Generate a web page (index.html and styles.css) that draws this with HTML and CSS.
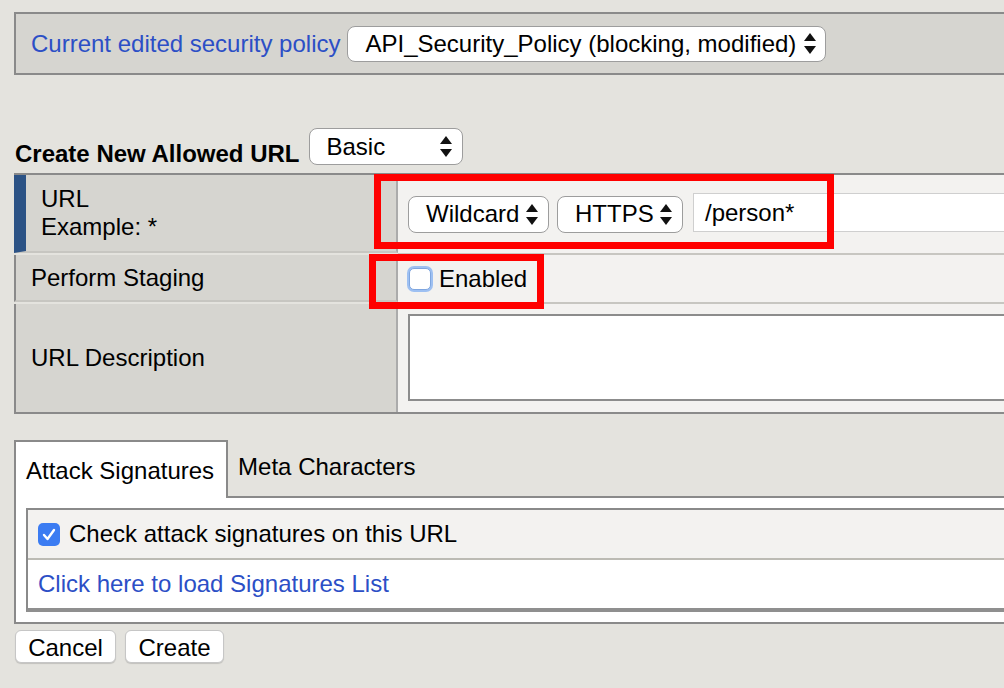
FILE: index.html
```html
<!DOCTYPE html>
<html>
<head>
<meta charset="utf-8">
<link rel="stylesheet" href="styles.css">
</head>
<body>
<div class="page">
  <div class="policy-bar">
    <span class="policy-label">Current edited security policy</span>
    <span class="select select-policy"><span>API_Security_Policy (blocking, modified)</span><svg class="arrows" viewBox="0 0 12 21" width="12" height="21"><path d="M6 0 L12 8 H0 Z"/><path d="M0 13 H12 L6 21 Z"/></svg></span>
  </div>

  <div class="create-row">
    <h1 class="create-title">Create New Allowed URL</h1>
    <span class="select select-basic"><span>Basic</span><svg class="arrows" viewBox="0 0 12 21" width="12" height="21"><path d="M6 0 L12 8 H0 Z"/><path d="M0 13 H12 L6 21 Z"/></svg></span>
  </div>

  <div class="form-table">
    <div class="label-cell row-url label-active">
      <div class="label-lines"><div>URL</div><div>Example: *</div></div>
    </div>
    <div class="value-cell row-url">
      <span class="select select-wild"><span>Wildcard</span><svg class="arrows" viewBox="0 0 12 21" width="12" height="21"><path d="M6 0 L12 8 H0 Z"/><path d="M0 13 H12 L6 21 Z"/></svg></span>
      <span class="select select-proto"><span>HTTPS</span><svg class="arrows" viewBox="0 0 12 21" width="12" height="21"><path d="M6 0 L12 8 H0 Z"/><path d="M0 13 H12 L6 21 Z"/></svg></span>
      <span class="text-input">/person*</span>
    </div>

    <div class="label-cell row-staging">Perform Staging</div>
    <div class="value-cell row-staging">
      <span class="checkbox checkbox-focus"></span>
      <span class="check-label">Enabled</span>
    </div>

    <div class="label-cell row-desc">URL Description</div>
    <div class="value-cell row-desc">
      <span class="textarea"></span>
    </div>
  </div>

  <div class="tabs">
    <div class="tab tab-active">Attack Signatures</div>
    <div class="tab tab-meta">Meta Characters</div>
  </div>
  <div class="tab-panel">
    <div class="inner-box">
      <div class="inner-row inner-row-check">
        <span class="checkbox checkbox-checked"><svg viewBox="0 0 22 23" width="22" height="23"><path d="M6 12 L9.5 16 L16 7" fill="none" stroke="#fff" stroke-width="2.4" stroke-linecap="round" stroke-linejoin="round"/></svg></span>
        <span class="check-label">Check attack signatures on this URL</span>
      </div>
      <div class="inner-row inner-row-link">
        <a class="link" href="#">Click here to load Signatures List</a>
      </div>
    </div>
  </div>

  <div class="buttons">
    <span class="btn btn-cancel">Cancel</span>
    <span class="btn btn-create">Create</span>
  </div>
</div>

<div class="highlight highlight-url"></div>
<div class="highlight highlight-staging"></div>
</body>
</html>
```

FILE: styles.css
```css
html, body {
  margin: 0;
  padding: 0;
}
body {
  width: 1004px;
  height: 688px;
  overflow: hidden;
  position: relative;
  background: #e4e3de;
  font-family: "Liberation Sans", Arial, Helvetica, sans-serif;
  font-size: 24px;
  color: #000;
}
.page {
  padding: 12px 0 0 14px;
  display: flex;
  flex-direction: column;
}

/* policy bar */
.policy-bar {
  height: 59px;
  border: 2px solid #8a8a8a;
  border-right: none;
  background: #d6d5d0;
  display: flex;
  align-items: center;
  gap: 7px;
  padding-left: 15px;
}
.policy-label {
  color: #2c4fc6;
}

/* select look */
.select {
  display: inline-flex;
  align-items: center;
  justify-content: space-between;
  box-sizing: border-box;
  background: #fff;
  border: 1px solid #9d9d9d;
  border-radius: 8px;
  padding: 0 10px 0 17px;
  height: 37px;
  flex: none;
  white-space: nowrap;
}
.arrows {
  fill: #111;
  flex: none;
}
.select-policy {
  width: 479px;
  height: 36px;
  padding-right: 9px;
}
.select-basic {
  width: 154px;
}
.select-wild {
  width: 141px;
}
.select-proto {
  width: 126px;
}

/* create row */
.create-row {
  margin-top: 53px;
  display: flex;
  align-items: flex-end;
  gap: 9px;
}
.create-title {
  margin: 0 0 -2px 1px;
  font-size: 24px;
  line-height: 26px;
  font-weight: bold;
}

/* form table */
.form-table {
  margin-top: 8px;
  display: grid;
  grid-template-columns: 384px 1fr;
  border-top: 2px solid #8a8a8a;
  border-bottom: 2px solid #8a8a8a;
}
.label-cell {
  box-sizing: border-box;
  background: #d6d5d0;
  border-left: 2px solid #8a8a8a;
  border-right: 2px solid #ababab;
  padding-left: 15px;
  display: flex;
  align-items: center;
}
.label-active {
  border-left: 12px solid #2b5285;
}
.label-lines {
  line-height: 28px;
}
.value-cell {
  background: #f3f2f0;
  display: flex;
  align-items: center;
  padding-left: 10px;
  min-width: 0;
}
.row-url {
  height: 78px;
  border-bottom: 2px solid #c7c6c1;
}
.row-staging {
  height: 47px;
  border-bottom: 2px solid #c7c6c1;
}
.row-desc {
  height: 108px;
}
.value-cell.row-url {
  gap: 8px;
}
.value-cell.row-url .select-proto {
  margin-right: 2px;
}
.value-cell.row-desc {
  align-items: flex-start;
  padding-top: 10px;
  box-sizing: border-box;
}
.text-input {
  flex: 1;
  height: 39px;
  box-sizing: border-box;
  margin-top: -3px;
  background: #fff;
  border: 1px solid #cfcfcf;
  border-right: none;
  padding-left: 11px;
  display: flex;
  align-items: center;
}
.textarea {
  flex: 1;
  height: 87px;
  box-sizing: border-box;
  background: #fff;
  border: 2px solid #8c8c8c;
  border-right: none;
}

/* checkboxes */
.checkbox {
  display: inline-block;
  box-sizing: border-box;
  flex: none;
}
.checkbox-focus {
  width: 22px;
  height: 22px;
  margin-left: 1px;
  background: #fff;
  border: 1px solid #7fa6e0;
  border-radius: 5px;
  box-shadow: 0 0 0 2px #9ec0f2;
}
.check-label {
  margin-left: 8px;
  white-space: nowrap;
}
.checkbox-checked {
  width: 22px;
  height: 23px;
  border-radius: 5px;
  background: #3b7cf2;
}
.checkbox-checked svg {
  display: block;
}

/* tabs */
.tabs {
  margin-top: 26px;
  display: flex;
  align-items: center;
  height: 56px;
  border-bottom: 2px solid #8a8a8a;
}
.tab {
  padding: 0 12px;
}
.tab-meta {
  padding-left: 10px;
  margin-top: -2px;
}
.tab-active {
  position: relative;
  align-self: flex-start;
  box-sizing: border-box;
  height: 58px;
  margin-bottom: -2px;
  padding: 2px 12px 0 10px;
  background: #fff;
  border: 2px solid #8a8a8a;
  border-bottom: none;
  display: flex;
  align-items: center;
}
.tab-panel {
  background: #fff;
  border-left: 2px solid #8a8a8a;
  border-bottom: 2px solid #8a8a8a;
  padding: 10px 0 10px 10px;
}
.inner-box {
  border: 2px solid #8a8a8a;
  border-right: none;
  border-bottom: 4px solid #8f8f8f;
}
.inner-row {
  height: 48px;
  display: flex;
  align-items: center;
  padding-left: 10px;
}
.inner-row-check {
  background: #f3f2f0;
  border-bottom: 2px solid #bcbbb4;
}
.inner-row-check .check-label {
  margin-left: 9px;
}
.inner-row-link {
  background: #fff;
}
.link {
  color: #2c4fc6;
  text-decoration: none;
}

/* buttons */
.buttons {
  margin-top: 6px;
  display: flex;
  gap: 9px;
  margin-left: 1px;
}
.btn {
  height: 33px;
  box-sizing: border-box;
  display: inline-flex;
  align-items: center;
  justify-content: center;
  padding-top: 2px;
  background: #fff;
  border: 1px solid #c6c6c6;
  border-radius: 6px;
  box-shadow: 0 1px 1px rgba(0,0,0,0.15);
}
.btn-cancel {
  width: 101px;
}
.btn-create {
  width: 99px;
}

/* red annotation boxes */
.highlight {
  position: absolute;
  box-sizing: border-box;
  border: 7px solid #ff0000;
}
.highlight-url {
  left: 374px;
  top: 174px;
  width: 460px;
  height: 75px;
}
.highlight-staging {
  left: 369px;
  top: 254px;
  width: 175px;
  height: 55px;
}
```
